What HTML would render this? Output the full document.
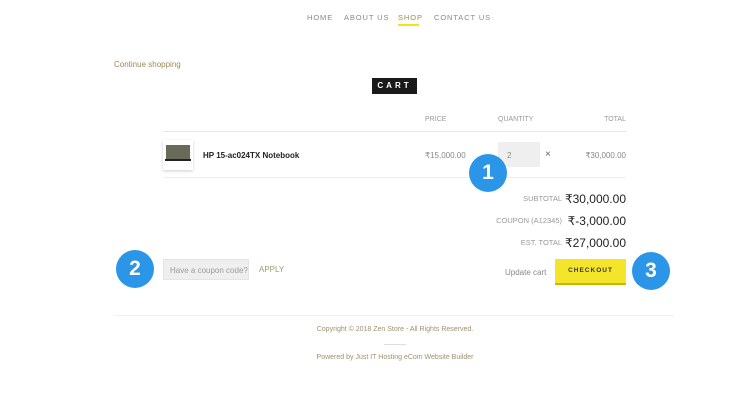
<!DOCTYPE html>
<html><head><meta charset="utf-8"><style>
*{margin:0;padding:0;box-sizing:border-box}
body{width:750px;height:400px;background:#fff;font-family:"Liberation Sans",sans-serif;position:relative;overflow:hidden;color:#777}
.a{position:absolute;white-space:nowrap}
.nav{font-size:7.5px;letter-spacing:0.9px;color:#888;top:13px}
.sm{font-size:7px;color:#999}
.circ{position:absolute;width:38px;height:38px;border-radius:50%;background:#2b95e8;color:#fff;font-weight:bold;font-size:21px;text-align:center;line-height:38px}
.lbl{font-size:7.5px;color:#999;text-align:right}
.big{font-size:12px;color:#222;text-align:right}
</style></head><body>
<div class="a nav" style="left:307px">HOME</div>
<div class="a nav" style="left:344px">ABOUT US</div>
<div class="a nav" style="left:398px;color:#a08a50">SHOP</div>
<div class="a" style="left:398px;top:24px;width:21px;height:2px;background:#f1e31c"></div>
<div class="a nav" style="left:434px">CONTACT US</div>
<div class="a" style="left:114px;top:60px;font-size:8px;color:#9a8a5a">Continue shopping</div>
<div class="a" style="left:372px;top:78px;width:45px;height:16px;background:#1a1a1a;color:#fff;font-size:8px;letter-spacing:3px;text-align:center;line-height:16px;font-weight:bold">CART</div>
<div class="a sm" style="left:425px;top:116px">PRICE</div>
<div class="a sm" style="left:498px;top:116px">QUANTITY</div>
<div class="a sm" style="right:124px;top:116px">TOTAL</div>
<div class="a" style="left:163px;top:131px;width:463px;height:1px;background:#e5e5e5"></div>
<div class="a" style="left:163px;top:140px;width:30px;height:30px;background:#fff;box-shadow:0 1px 3px rgba(0,0,0,.2)"></div>
<div class="a" style="left:166px;top:145px;width:24px;height:14px;background:#6a6a5a"></div>
<div class="a" style="left:165px;top:159px;width:26px;height:2px;background:#222"></div>
<div class="a" style="left:203px;top:151px;font-size:8px;font-weight:bold;color:#222">HP 15-ac024TX Notebook</div>
<div class="a" style="left:425px;top:151px;font-size:8px;color:#888">₹15,000.00</div>
<div class="a" style="left:498px;top:142px;width:42px;height:25px;background:#efefef;font-size:8px;color:#888;padding:9px 0 0 9px">2</div>
<div class="a" style="left:545px;top:149px;font-size:10px;color:#666">×</div>
<div class="a" style="right:124px;top:151px;font-size:8px;color:#888">₹30,000.00</div>
<div class="a" style="left:163px;top:177px;width:463px;height:1px;background:#eee"></div>
<div class="a lbl" style="right:188px;top:194px">SUBTOTAL</div>
<div class="a big" style="right:124px;top:192px">₹30,000.00</div>
<div class="a lbl" style="right:188px;top:216px">COUPON (A12345)</div>
<div class="a big" style="right:124px;top:214px">₹-3,000.00</div>
<div class="a lbl" style="right:188px;top:238px">EST. TOTAL</div>
<div class="a big" style="right:124px;top:236px">₹27,000.00</div>
<div class="a" style="left:163px;top:259px;width:86px;height:21px;background:#efefef;border:1px solid #e4e4e4;font-size:8px;color:#999;padding:6px 0 0 6px">Have a coupon code?</div>
<div class="a" style="left:259px;top:265px;font-size:8px;color:#a09a70">APPLY</div>
<div class="a" style="left:505px;top:268px;font-size:8px;color:#888">Update cart</div>
<div class="a" style="left:555px;top:259px;width:71px;height:26px;background:#f5e52a;border-bottom:2px solid #c8b800;font-size:6.5px;font-weight:bold;letter-spacing:1px;color:#333;text-align:center;line-height:24px">CHECKOUT</div>
<div class="a" style="left:114px;top:315px;width:560px;height:1px;background:#eee"></div>
<div class="a sm" style="left:0;width:790px;text-align:center;top:326px;color:#a09070">Copyright © 2018 Zen Store - All Rights Reserved.</div>
<div class="a" style="left:384px;top:344px;width:22px;height:1px;background:#ddd"></div>
<div class="a sm" style="left:0;width:790px;text-align:center;top:354px;color:#a09070">Powered by Just IT Hosting eCom Website Builder</div>
<div class="circ" style="left:469px;top:154px">1</div>
<div class="circ" style="left:116px;top:250px">2</div>
<div class="circ" style="left:632px;top:252px">3</div>
</body></html>
